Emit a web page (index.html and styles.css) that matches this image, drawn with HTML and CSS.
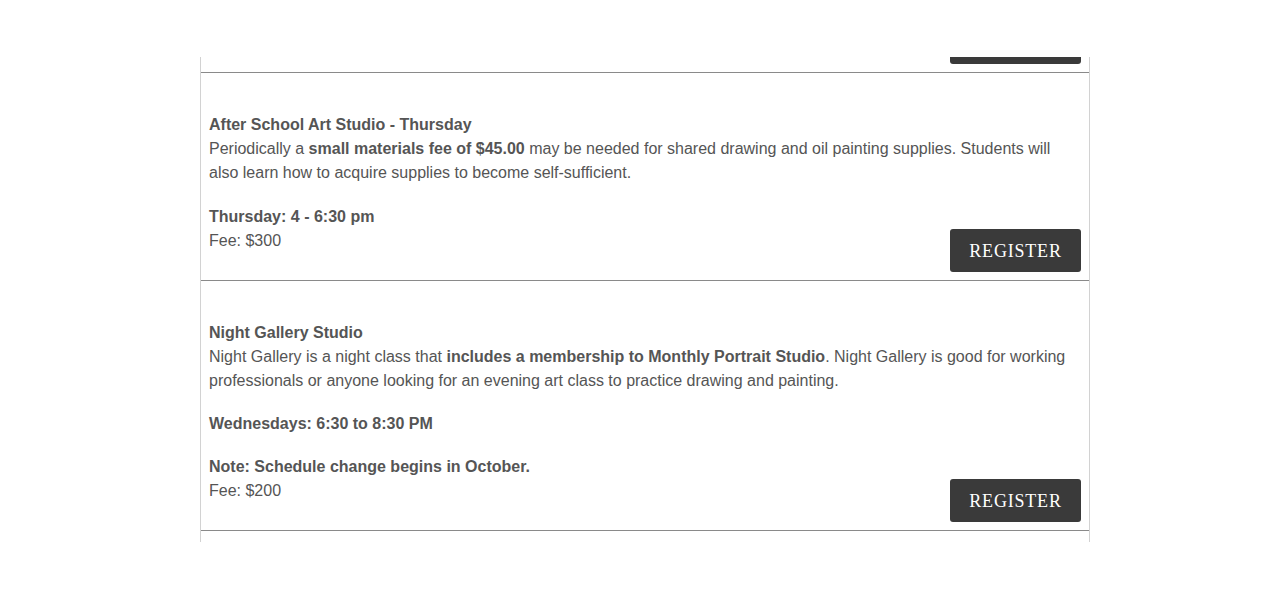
FILE: index.html
```html
<!DOCTYPE html>
<html lang="en">
<head>
<meta charset="utf-8">
<title>Classes</title>
<link rel="stylesheet" href="styles.css">
</head>
<body>
<div class="page">
  <div class="viewport">
    <div class="item-tail">
      <span class="btn-stub"></span>
    </div>

    <div class="item">
      <p class="desc gap20"><strong>After School Art Studio - Thursday</strong><br>Periodically a <strong>small materials fee of $45.00</strong> may be needed for shared drawing and oil painting supplies. Students will also learn how to acquire supplies to become self-sufficient.</p>
      <p class="when"><strong>Thursday: 4 - 6:30 pm</strong></p>
      <div class="fee-row"><span>Fee: $300</span><a class="btn" href="#">Register</a></div>
    </div>

    <div class="item">
      <p class="desc gap19"><strong>Night Gallery Studio</strong><br>Night Gallery is a night class that <strong>includes a membership to Monthly Portrait Studio</strong>. Night Gallery is good for working professionals or anyone looking for an evening art class to practice drawing and painting.</p>
      <p class="when gap19"><strong>Wednesdays: 6:30 to 8:30 PM</strong></p>
      <p class="when"><strong>Note: Schedule change begins in October.</strong></p>
      <div class="fee-row"><span>Fee: $200</span><a class="btn" href="#">Register</a></div>
    </div>

    <div class="item item-empty"></div>
  </div>
</div>
</body>
</html>
```

FILE: styles.css
```css
html, body {
  margin: 0;
  padding: 0;
  background: #fff;
}

body {
  font-family: "Liberation Sans", Arial, Helvetica, sans-serif;
  font-size: 16px;
  line-height: 24px;
  color: #555;
}

.page {
  padding: 57px 0 0 200px;
}

.viewport {
  width: 888px;
  height: 485px;
  overflow: hidden;
  border-left: 1px solid #d2d2d2;
  border-right: 1px solid #d2d2d2;
}

.item-tail {
  display: flex;
  justify-content: flex-end;
  padding: 0 8px 8px 8px;
  border-bottom: 1px solid #8a8a8a;
}

.btn-stub {
  display: block;
  width: 131px;
  height: 7px;
  background: #3a3a3a;
  border-radius: 0 0 3px 3px;
}

.item {
  padding: 40px 8px 8px 8px;
  border-bottom: 1px solid #8a8a8a;
}

.item-empty {
  height: 40px;
  border-bottom: none;
}

.item p {
  margin: 0;
}

.gap20 {
  margin-bottom: 20px !important;
}

.gap19 {
  margin-bottom: 19px !important;
}

strong {
  font-weight: bold;
}

.fee-row {
  display: flex;
  justify-content: space-between;
  align-items: flex-start;
}

.btn {
  box-sizing: border-box;
  width: 131px;
  height: 43px;
  display: flex;
  align-items: center;
  justify-content: center;
  background: #3a3a3a;
  border-radius: 3px;
  color: #fff;
  text-decoration: none;
  text-transform: uppercase;
  font-family: "Liberation Serif", "Times New Roman", serif;
  font-size: 18px;
  letter-spacing: 0.8px;
  line-height: 1;
}
```
